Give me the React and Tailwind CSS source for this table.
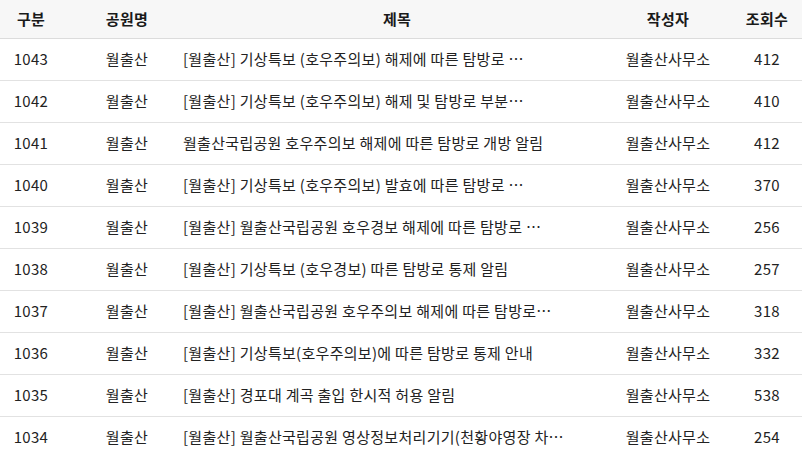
import React from "react";

// Notice board list (월출산 공지사항)
const rows = [
  { no: 1043, park: "월출산", title: "[월출산] 기상특보 (호우주의보) 해제에 따른 탐방로 …", writer: "월출산사무소", views: 412 },
  { no: 1042, park: "월출산", title: "[월출산] 기상특보 (호우주의보) 해제 및 탐방로 부분…", writer: "월출산사무소", views: 410 },
  { no: 1041, park: "월출산", title: "월출산국립공원 호우주의보 해제에 따른 탐방로 개방 알림", writer: "월출산사무소", views: 412 },
  { no: 1040, park: "월출산", title: "[월출산] 기상특보 (호우주의보) 발효에 따른 탐방로 …", writer: "월출산사무소", views: 370 },
  { no: 1039, park: "월출산", title: "[월출산] 월출산국립공원 호우경보 해제에 따른 탐방로 …", writer: "월출산사무소", views: 256 },
  { no: 1038, park: "월출산", title: "[월출산] 기상특보 (호우경보) 따른 탐방로 통제 알림", writer: "월출산사무소", views: 257 },
  { no: 1037, park: "월출산", title: "[월출산] 월출산국립공원 호우주의보 해제에 따른 탐방로…", writer: "월출산사무소", views: 318 },
  { no: 1036, park: "월출산", title: "[월출산] 기상특보(호우주의보)에 따른 탐방로 통제 안내", writer: "월출산사무소", views: 332 },
  { no: 1035, park: "월출산", title: "[월출산] 경포대 계곡 출입 한시적 허용 알림", writer: "월출산사무소", views: 538 },
  { no: 1034, park: "월출산", title: "[월출산] 월출산국립공원 영상정보처리기기(천황야영장 차…", writer: "월출산사무소", views: 254 },
];

const cols = "grid grid-cols-[62px_116px_426px_128px_70px]";

export default function App() {
  return (
    <div
      className="w-[802px] h-[456px] overflow-hidden bg-white text-[15px] tracking-[0.3px] text-[#222]"
      style={{ fontFamily: '"Noto Sans CJK KR", "Noto Sans", sans-serif' }}
    >
      <div className={`${cols} h-[39px] items-center bg-[#f7f7f7] border-b border-[#dcdcdc] font-bold text-[#1a1a1a]`}>
        <div className="text-center">구분</div>
        <div className="text-center pl-[14px]">공원명</div>
        <div className="text-center pl-[12px]">제목</div>
        <div className="text-center">작성자</div>
        <div className="text-center">조회수</div>
      </div>
      {rows.map((r) => (
        <div key={r.no} className={`${cols} h-[42px] items-center border-b border-[#e2e2e2]`}>
          <div className="text-center">{r.no}</div>
          <div className="text-center pl-[14px]">{r.park}</div>
          <div className="pl-[5px] whitespace-nowrap overflow-hidden">{r.title}</div>
          <div className="text-center">{r.writer}</div>
          <div className="text-center">{r.views}</div>
        </div>
      ))}
    </div>
  );
}
